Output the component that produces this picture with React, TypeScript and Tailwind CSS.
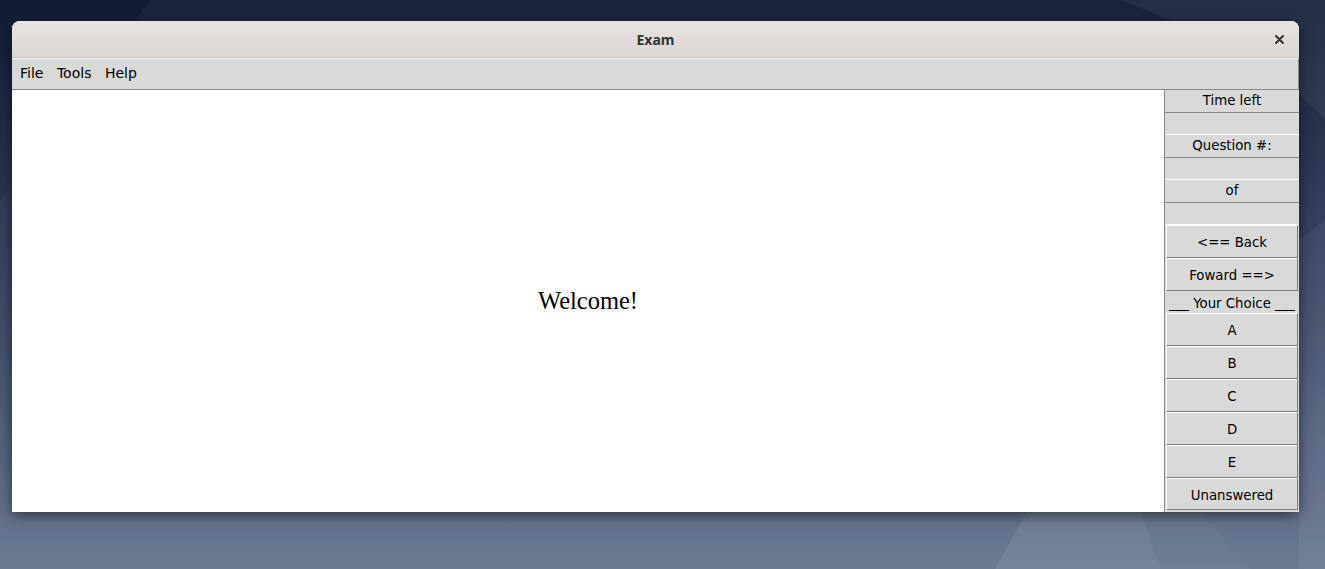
import React from 'react'

const sans = { fontFamily: '"DejaVu Sans", sans-serif' }

const PanelLabel = ({ text }: { text: string }) => (
  <div className="h-[22px] flex items-center justify-center pb-px text-[13.3px] text-black bg-[#d9d9d9] leading-none">
    {text}
  </div>
)

const PanelEntry = () => (
  <div className="h-[23px] bg-[#d9d9d9] border-t border-t-[#8a8a8a] border-b border-b-white" />
)

const PanelButton = ({ text, tall = true }: { text: string; tall?: boolean }) => (
  <div
    className={
      (tall ? 'h-[33px]' : 'h-[32px]') +
      ' mx-px pt-[3px] flex items-center justify-center text-[13.3px] text-black bg-[#d9d9d9] border border-t-white border-l-white border-b-[#7d7d7d] border-r-[#7d7d7d] leading-none'
    }
  >
    {text}
  </div>
)

export default function App() {
  return (
    <div className="relative w-[1325px] h-[569px] overflow-hidden bg-gradient-to-b from-[#131c34] via-[#36425e] to-[#67778f]">
      {/* wallpaper */}
      <svg className="absolute inset-0" width="1325" height="569" viewBox="0 0 1325 569">
        <polygon points="150,0 1325,0 1325,569 0,569 0,200" fill="#ffffff" opacity="0.03" />
        <path d="M1120 0 C1200 30 1280 70 1325 120 L1325 0 Z" fill="#ffffff" opacity="0.05" />
        <polygon points="1027,512 1140,512 1160,569 995,569" fill="#ffffff" opacity="0.08" />
        <polygon points="1140,512 1200,512 1250,569 1160,569" fill="#ffffff" opacity="0.03" />
        <polygon points="1299,240 1325,220 1325,569 1299,569" fill="#ffffff" opacity="0.05" />
      </svg>

      <div
        className="relative ml-[12px] mt-[21px] w-[1287px] h-[491px] flex flex-col rounded-t-[8px] shadow-[0_3px_14px_rgba(0,0,0,0.55)] bg-white"
        style={sans}
      >
        {/* title bar */}
        <div className="h-[37px] flex items-center justify-center relative rounded-t-[8px] bg-gradient-to-b from-[#e6e3e0] to-[#dcd8d4] border-b border-b-[#c4c0bb]">
          <span
            className="text-[14px] font-bold text-[#2e3436]"
            style={{ fontFamily: '"Noto Sans", "DejaVu Sans", sans-serif' }}
          >
            Exam
          </span>
          <svg className="absolute right-[15px] top-[14px]" width="9" height="9" viewBox="0 0 9 9">
            <path d="M1 1 L8 8 M8 1 L1 8" stroke="#2e3436" strokeWidth="2" strokeLinecap="round" />
          </svg>
        </div>

        {/* menu bar */}
        <div className="h-[32px] flex items-center gap-[13.5px] pl-[8px] pb-[2px] bg-[#d9d9d9] border-t border-t-[#f2f2f2] border-b border-b-[#8a8a8a] border-r border-r-[#8a8a8a] text-[14px] text-black">
          <span>File</span>
          <span>Tools</span>
          <span>Help</span>
        </div>

        {/* body */}
        <div className="flex-1 flex">
          <div className="flex-1 flex items-center justify-center bg-white">
            <span
              className="text-[24.5px] text-black"
              style={{ fontFamily: '"Liberation Serif", serif' }}
            >
              Welcome!
            </span>
          </div>

          <div className="w-[135px] flex flex-col bg-[#d9d9d9] border-l border-l-[#8a8a8a]">
            <PanelLabel text="Time left" />
            <PanelEntry />
            <PanelLabel text="Question #:" />
            <PanelEntry />
            <PanelLabel text="of" />
            <PanelEntry />
            <PanelButton text="<== Back" />
            <PanelButton text="Foward ==>" />
            <div className="h-[22px] pt-[3px] flex items-center justify-center text-[13.3px] text-black leading-none whitespace-nowrap">
              ___ Your Choice ___
            </div>
            <PanelButton text="A" />
            <PanelButton text="B" />
            <PanelButton text="C" />
            <PanelButton text="D" />
            <PanelButton text="E" />
            <PanelButton text="Unanswered" tall={false} />
          </div>
        </div>
      </div>
    </div>
  )
}
